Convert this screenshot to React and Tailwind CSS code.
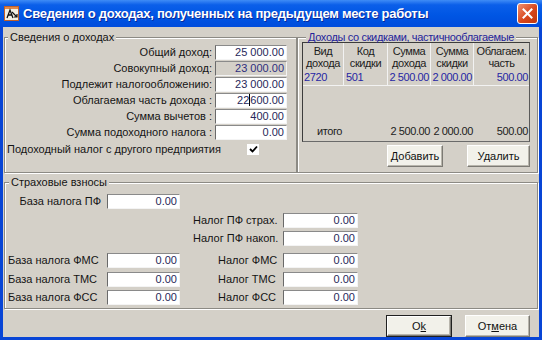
import React from 'react';

const BG = 'bg-[#d4d0c8]';

const Field = ({ value, gray, width = 'w-[72px]', cursorAt }) => (
  <div
    className={`${width} h-[15px] ${gray ? BG : 'bg-white'} border border-t-[#8a8a8a] border-l-[#6a6a6a] border-b-[#f4f4f4] border-r-[#f4f4f4] flex items-center justify-end pr-[2px] text-[11px] leading-[13px] whitespace-nowrap ${gray ? 'text-[#2e2e7e]' : 'text-[#27275a]'}`}
  >
    {cursorAt != null ? (
      <>
        <span>{value.slice(0, cursorAt)}</span>
        <span className="inline-block w-px h-[12px] bg-black" />
        <span>{value.slice(cursorAt)}</span>
      </>
    ) : (
      value
    )}
  </div>
);

const Legend = ({ children, className = '' }) => (
  <legend className={`${BG} px-[2px] text-[11px] leading-[13px] whitespace-nowrap ${className}`}>{children}</legend>
);

const groupBox =
  'border border-[#8c8a84] shadow-[inset_1px_1px_0_#ffffff,1px_1px_0_#ffffff] m-0 p-0 min-w-0';

const Button = ({ children, w, isDefault }) => (
  <div className={`${w} h-[22px] shrink-0 ${isDefault ? 'border border-[#202020]' : ''}`}>
    <div className="w-full h-full bg-[#f2f1ea] border border-t-white border-l-white border-b-[#7c7a74] border-r-[#7c7a74] shadow-[inset_-1px_-1px_0_#b8b5ac] flex items-center justify-center text-[11px] leading-[13px] text-[#111]">
      {children}
    </div>
  </div>
);

const incomeRows = [
  { label: 'Общий доход:', value: '25 000.00' },
  { label: 'Совокупный доход:', value: '23 000.00', gray: true },
  { label: 'Подлежит налогообложению:', value: '23 000.00' },
  { label: 'Облагаемая часть дохода :', value: '22 600.00', cursorAt: 2 },
  { label: 'Сумма вычетов :', value: '400.00' },
  { label: 'Сумма подоходного налога :', value: '0.00' },
];

const cols = ['w-[41px]', 'w-[44px]', 'w-[43px]', 'w-[43px]', 'w-[55px]'];

const TitleIcon = () => (
  <svg width="15" height="15" viewBox="0 0 15 15">
    <rect x="0.5" y="0.5" width="14" height="14" fill="#f3efe2" stroke="#c0602a" />
    <rect x="1" y="1" width="13" height="2" fill="#e08a4a" />
    <path d="M3 12 L6 4 L9 12 M4.2 9 L7.8 9" stroke="#111" strokeWidth="1.3" fill="none" />
    <path d="M8 6 L13 11 M13 8 L13 11 L10 11" stroke="#111" strokeWidth="1.2" fill="none" />
  </svg>
);

export default function App() {
  return (
    <div className="w-[542px] h-[340px] bg-[#0845d6] flex flex-col overflow-hidden font-['Liberation_Sans',Arial,sans-serif] text-[#141414]">
      {/* Заголовок окна */}
      <div className="h-[27px] shrink-0 flex items-center bg-[linear-gradient(#3f8cf6_0%,#0b5fe9_18%,#0056e4_55%,#004cdc_100%)]">
        <div className="ml-[4px] mr-[4px] flex items-center">
          <TitleIcon />
        </div>
        <div className="text-white font-bold text-[13px] leading-[16px] tracking-[-0.25px] [text-shadow:1px_1px_0_#0a2a9a] flex-1 whitespace-nowrap">
          Сведения о доходах, полученных на предыдущем месте  работы
        </div>
        <div className="mr-[4px] w-[21px] h-[21px] rounded-[3px] border border-white bg-[linear-gradient(135deg,#f09070,#d8461c_55%,#c0380e)] flex items-center justify-center">
          <svg width="11" height="11" viewBox="0 0 11 11">
            <path d="M1.5 1.5 L9.5 9.5 M9.5 1.5 L1.5 9.5" stroke="white" strokeWidth="2" strokeLinecap="square" />
          </svg>
        </div>
      </div>

      {/* Тело окна */}
      <div className={`flex-1 mx-[3px] mb-[3px] ${BG} overflow-hidden flex flex-col px-[1px] pt-[4px]`}>
        <div className="flex">
          {/* Сведения о доходах */}
          <fieldset className={`${groupBox} w-[293px] h-[142px]`}>
            <Legend className="ml-[3px]">Сведения о доходах</Legend>
            <div className="flex flex-col">
              {incomeRows.map((r) => (
                <div key={r.label} className="h-[16px] flex items-center">
                  <div className="w-[207px] text-right text-[11px] leading-[13px] whitespace-nowrap">{r.label}</div>
                  <div className="ml-[3px]">
                    <Field value={r.value} gray={r.gray} cursorAt={r.cursorAt} />
                  </div>
                </div>
              ))}
              <div className="h-[14px] mt-[2px] flex items-center">
                <div className="w-[242px] pl-[2px] text-[11px] leading-[13px] whitespace-nowrap">
                  Подоходный налог с другого предприятия
                </div>
                <div className="w-[12px] h-[11px] bg-white flex items-center justify-center">
                  <svg width="9" height="8" viewBox="0 0 9 8">
                    <path d="M1 4 L3.5 6.5 L8 1.5" stroke="#000" strokeWidth="1.8" fill="none" />
                  </svg>
                </div>
              </div>
            </div>
          </fieldset>

          {/* Доходы со скидками */}
          <fieldset className={`${groupBox} w-[241px] h-[142px]`}>
            <Legend className="ml-[8px] text-[#24249a] tracking-[-0.35px]">Доходы со скидками, частичнооблагаемые</Legend>
            <div className="ml-[4px] -mt-[2px] w-[228px] h-[100px] border border-t-[#3c3c3c] border-l-[#3c3c3c] border-r-[#5a5a5a] border-b-[#6a6a6a] flex flex-col text-[11px] tracking-[-0.4px] whitespace-nowrap">
              <div className="flex h-[28px]">
                {[['Вид', 'дохода'], ['Код', 'скидки'], ['Сумма', 'дохода'], ['Сумма', 'скидки'], ['Облагаем.', 'часть']].map((h, i) => (
                  <div
                    key={i}
                    className={`${cols[i]} ${i < 4 ? 'border-r border-[#f2f2f2]' : ''} flex flex-col items-center pt-[2px] leading-[12px] text-[#1c1c1c] overflow-hidden`}
                  >
                    <span>{h[0]}</span>
                    <span>{h[1]}</span>
                  </div>
                ))}
              </div>
              <div className="flex h-[15px] border-b border-[#f2f2f2] text-[#2626a4] leading-[13px]">
                <div className={`${cols[0]} border-r border-[#f2f2f2] pl-[1px]`}>2720</div>
                <div className={`${cols[1]} border-r border-[#f2f2f2] pl-[2px]`}>501</div>
                <div className={`${cols[2]} border-r border-[#f2f2f2] text-right pr-[1px]`}>2 500.00</div>
                <div className={`${cols[3]} border-r border-[#f2f2f2] text-right pr-[1px]`}>2 000.00</div>
                <div className={`${cols[4]} text-right pr-[1px]`}>500.00</div>
              </div>
              <div className="flex-1" />
              <div className="flex h-[15px] mb-[1px] leading-[13px] text-[#1c1c1c]">
                <div className="w-[85px] pl-[14px]">итого</div>
                <div className={`${cols[2]} text-right pr-[1px]`}>2 500.00</div>
                <div className={`${cols[3]} text-right pr-[1px]`}>2 000.00</div>
                <div className={`${cols[4]} text-right pr-[1px]`}>500.00</div>
              </div>
            </div>
            <div className="ml-[4px] w-[228px] mt-[3px] flex justify-end gap-[24px]">
              <Button w="w-[56px]">Добавить</Button>
              <Button w="w-[63px]">Удалить</Button>
            </div>
          </fieldset>
        </div>

        {/* Страховые взносы */}
        <fieldset className={`${groupBox} w-[534px] h-[139px] mt-[3px]`}>
          <Legend className="ml-[4px]">Страховые взносы</Legend>
          <div className="flex flex-col text-[11px] leading-[13px] whitespace-nowrap">
            <div className="flex items-center mt-[5px]">
              <div className="w-[102px] text-right pr-[6px]">База налога ПФ</div>
              <Field value="0.00" width="w-[73px]" />
            </div>
            <div className="flex items-center mt-[4px]">
              <div className="w-[175px]" />
              <div className="w-[103px] pl-[13px]">Налог ПФ страх.</div>
              <Field value="0.00" width="w-[75px]" />
            </div>
            <div className="flex items-center mt-[3px]">
              <div className="w-[175px]" />
              <div className="w-[103px] pl-[13px]">Налог ПФ накоп.</div>
              <Field value="0.00" width="w-[75px]" />
            </div>
            {[
              ['База налога ФМС', 'Налог ФМС', 'mt-[7px]'],
              ['База налога ТМС', 'Налог ТМС', 'mt-[4px]'],
              ['База налога ФСС', 'Налог ФСС', 'mt-[3px]'],
            ].map(([l, r, m]) => (
              <div key={l} className={`flex items-center ${m}`}>
                <div className="w-[102px] pl-[3px]">{l}</div>
                <Field value="0.00" width="w-[73px]" />
                <div className="w-[103px] pl-[38px]">{r}</div>
                <Field value="0.00" width="w-[75px]" />
              </div>
            ))}
          </div>
        </fieldset>

        <div className="flex justify-end gap-[13px] pr-[8px] mt-[6px]">
          <Button w="w-[66px]" isDefault>
            <span>O<span className="underline">k</span></span>
          </Button>
          <Button w="w-[65px]">
            <span>От<span className="underline">м</span>ена</span>
          </Button>
        </div>
      </div>
    </div>
  );
}
